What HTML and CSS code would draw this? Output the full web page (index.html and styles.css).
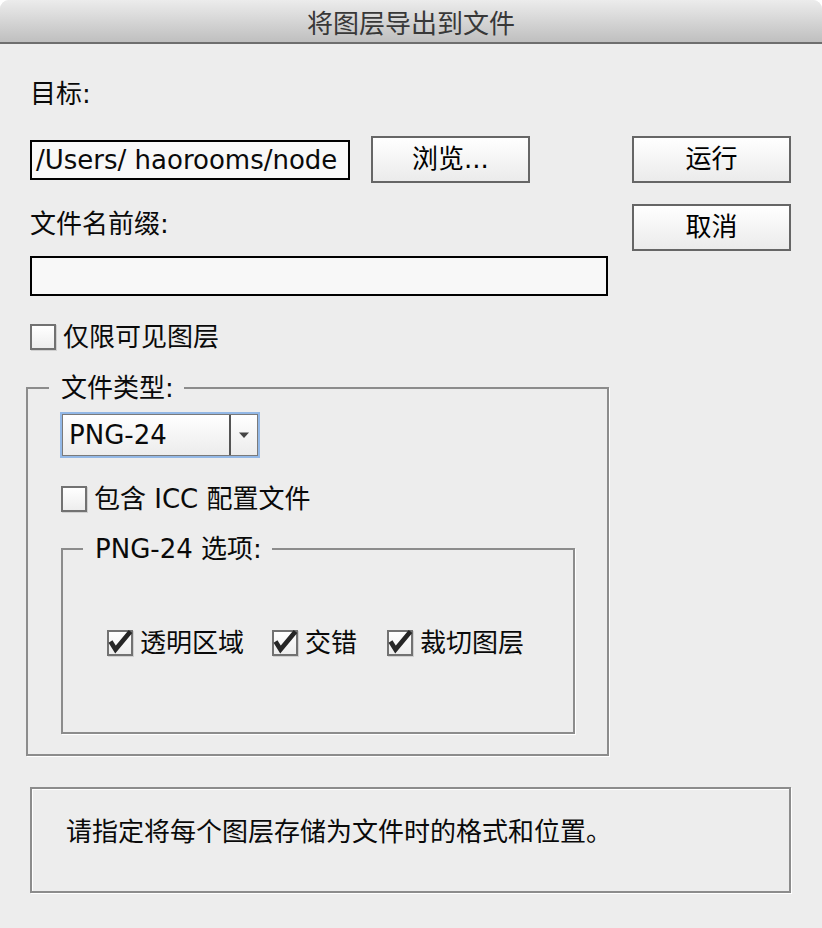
FILE: index.html
```html
<!DOCTYPE html>
<html lang="zh-CN">
<head>
<meta charset="utf-8">
<title>将图层导出到文件</title>
<link rel="stylesheet" href="styles.css">
</head>
<body>
<div class="window">
  <div class="titlebar">将图层导出到文件</div>
  <div class="content">
    <div class="main">
      <div class="left">
        <div class="label label-target">目标:</div>
        <div class="path-row">
          <div class="field field-path">/Users/ haorooms/node</div>
          <div class="btn btn-browse">浏览...</div>
        </div>
        <div class="label label-prefix">文件名前缀:</div>
        <div class="field field-prefix"></div>
        <div class="check check-visible"><span class="box"></span><span class="check-text">仅限可见图层</span></div>
        <fieldset class="group group-type">
          <legend class="legend legend-type">文件类型:</legend>
          <div class="select">
            <span class="select-value">PNG-24</span>
            <span class="select-arrow"><svg width="12" height="8" viewBox="0 0 12 8"><path d="M1 1.5 H11 L6 7 Z" fill="#444"/></svg></span>
          </div>
          <div class="check check-icc"><span class="box"></span><span class="check-text">包含 ICC 配置文件</span></div>
          <fieldset class="group group-options">
            <legend class="legend legend-options">PNG-24 选项:</legend>
            <div class="options-row">
              <div class="check check-on"><span class="box"><svg width="26" height="26" viewBox="0 0 26 26"><polyline points="3.5,11.5 8.5,19.5 23.5,1.5" fill="none" stroke="#262626" stroke-width="4.6" stroke-linejoin="miter"/></svg></span><span class="check-text">透明区域</span></div>
              <div class="check check-on"><span class="box"><svg width="26" height="26" viewBox="0 0 26 26"><polyline points="3.5,11.5 8.5,19.5 23.5,1.5" fill="none" stroke="#262626" stroke-width="4.6" stroke-linejoin="miter"/></svg></span><span class="check-text">交错</span></div>
              <div class="check check-on"><span class="box"><svg width="26" height="26" viewBox="0 0 26 26"><polyline points="3.5,11.5 8.5,19.5 23.5,1.5" fill="none" stroke="#262626" stroke-width="4.6" stroke-linejoin="miter"/></svg></span><span class="check-text">裁切图层</span></div>
            </div>
          </fieldset>
        </fieldset>
      </div>
      <div class="right">
        <div class="btn btn-run">运行</div>
        <div class="btn btn-cancel">取消</div>
      </div>
    </div>
    <div class="message">请指定将每个图层存储为文件时的格式和位置。</div>
  </div>
</div>
</body>
</html>
```

FILE: styles.css
```css
html {
  margin: 0;
  padding: 0;
  background: #ffffff;
}
body {
  margin: 0;
  padding: 0;
  width: 822px;
  height: 928px;
  overflow: hidden;
  font-family: "DejaVu Sans", "Noto Sans CJK SC", sans-serif;
  font-size: 26px;
  color: #0a0a0a;
}
.window {
  width: 822px;
  height: 928px;
  background: #ededed;
  border-radius: 9px 9px 0 0;
  overflow: hidden;
}
.titlebar {
  height: 42px;
  border-bottom: 2px solid #6e6e6e;
  background: linear-gradient(#ececec, #bfbfbf);
  text-align: center;
  font-family: "Noto Sans CJK SC", sans-serif;
  font-size: 26px;
  line-height: 44px;
  color: #383838;
}
.content {
  padding: 0 30px 0 30px;
}
.main {
  display: flex;
  gap: 22px;
}
.left {
  width: 580px;
  display: flex;
  flex-direction: column;
}
.right {
  width: 160px;
  display: flex;
  flex-direction: column;
  gap: 21px;
  padding-top: 92px;
}
.label {
  line-height: 30px;
  height: 30px;
}
.label-target {
  margin-top: 35px;
}
.path-row {
  margin-top: 27px;
  display: flex;
  align-items: center;
  gap: 21px;
  height: 47px;
}
.field {
  box-sizing: border-box;
  border: 2px solid #000;
  background: #f8f8f8;
}
.field-path {
  width: 320px;
  height: 40px;
  line-height: 36px;
  padding-left: 4px;
  white-space: nowrap;
  overflow: hidden;
}
.btn {
  box-sizing: border-box;
  width: 159px;
  height: 47px;
  border: 2px solid #666666;
  background: linear-gradient(#ffffff, #ebebeb);
  text-align: center;
  line-height: 42px;
  color: #000;
}
.label-prefix {
  margin-top: 26px;
}
.field-prefix {
  margin-top: 17px;
  width: 578px;
  height: 40px;
}
.check {
  display: flex;
  align-items: center;
  height: 26px;
  line-height: 26px;
}
.box {
  box-sizing: border-box;
  width: 26px;
  height: 26px;
  border: 2px solid #727272;
  background: linear-gradient(#ffffff, #ededed);
  flex: none;
  position: relative;
  box-shadow: 1px 1px 0 #d0d0d0;
}
.box svg {
  position: absolute;
  left: -2px;
  top: -2px;
  display: block;
}
.check-text {
  margin-left: 7px;
}
.check-visible {
  margin-top: 28px;
}
.group {
  margin: 0;
  border: 2px solid #8c8c8c;
  box-shadow: 1px 1px 0 #ffffff;
  min-width: 0;
}
.legend {
  line-height: 30px;
  height: 30px;
  padding: 0;
}
.group-type {
  margin-top: 23px;
  margin-left: -4px;
  width: 583px;
  box-sizing: border-box;
  padding: 9px 32px 20px 32px;
}
.legend-type {
  margin-left: -11px;
  padding: 0 10px 0 12px;
}
.select {
  box-sizing: border-box;
  border: 1px solid #7a7a7a;
  box-shadow: 0 0 0 2px #93b8e6;
  margin-left: 2px;
  margin-top: 2px;
  width: 196px;
  height: 42px;
  background: linear-gradient(#ffffff, #ececec);
  display: flex;
  align-items: center;
}
.select-value {
  width: 160px;
  padding-left: 6px;
  line-height: 40px;
}
.select-arrow {
  flex: 1;
  height: 100%;
  border-left: 2px solid #555;
  display: flex;
  align-items: center;
  justify-content: center;
}
.select-arrow svg {
  display: block;
}
.check-icc {
  margin-top: 30px;
  margin-left: 1px;
}
.group-options {
  margin-top: 22px;
  margin-left: 1px;
  width: 514px;
  box-sizing: border-box;
  padding: 66px 20px 76px 44px;
}
.legend-options {
  margin-left: -24px;
  padding: 0 10px 0 12px;
}
.options-row {
  display: flex;
  gap: 28px;
}
.options-row .check:nth-child(3) {
  margin-left: 2px;
}
.message {
  margin-top: 31px;
  box-sizing: border-box;
  width: 761px;
  height: 106px;
  border: 2px solid #8c8c8c;
  box-shadow: 1px 1px 0 #ffffff, inset 1px 1px 0 #ffffff;
  padding: 28px 0 0 34px;
  line-height: 30px;
}
```
